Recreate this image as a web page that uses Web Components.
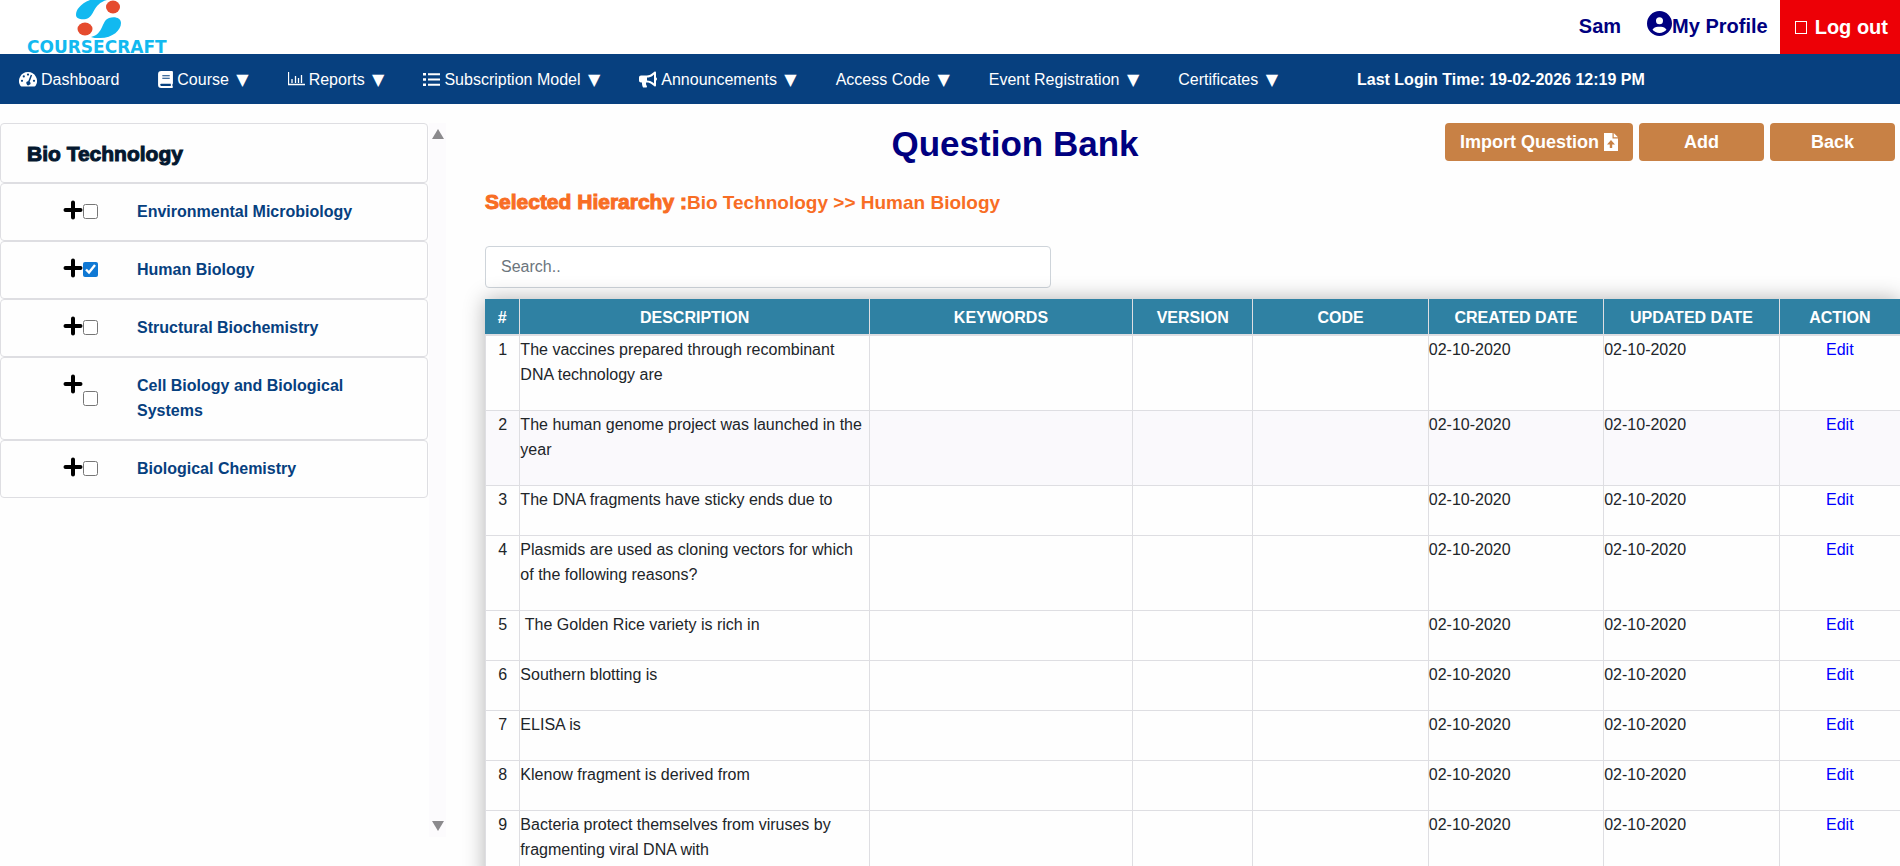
<!DOCTYPE html>
<html lang="en">
<head>
<meta charset="utf-8">
<title>Question Bank</title>
<style>
  body {
    margin: 0;
    background: #fefefe;
    color: #212529;
    font: 16px/25px "Liberation Sans", Arial, sans-serif;
  }
</style>
</head>
<body>
<question-bank-app></question-bank-app>

<script>
const icons = {
  gauge: `<svg viewBox="0 0 18 16" width="18" height="16"><path fill="currentColor" d="M9 1a9 9 0 0 0-7.6 13.8c.3.4.7.6 1.2.6h12.8c.5 0 .9-.2 1.2-.6A9 9 0 0 0 9 1z"/><g fill="#06407f"><circle cx="9" cy="3.6" r="1.1"/><circle cx="4.8" cy="5.4" r="1.1"/><circle cx="3" cy="9.8" r="1.1"/><circle cx="15" cy="9.8" r="1.1"/><path d="M11.8 3.8l1.3.5-2.4 6.4a2 2 0 1 1-1.5-.5z"/></g></svg>`,
  book: `<svg viewBox="0 0 14 16" width="15" height="17"><path fill="currentColor" d="M3 0h10a1 1 0 0 1 1 1v10.500a1 1 0 0 1-.5.9v1.700a1 1 0 0 1 .5.9 1 1 0 0 1-1 1H3a3 3 0 0 1-3-3V3a3 3 0 0 1 3-3z"/><path fill="#06407f" d="M4 4h7v1H4zM4 6.300h7v1H4zM3 12h9v2H3a1 1 0 0 1 0-2z"/></svg>`,
  chart: `<svg viewBox="0 0 17 14" width="17" height="14"><path fill="none" stroke="currentColor" d="M.5 0v12.500H17M4 11V7M7.500 11V4M10.500 11V6M13.500 11V3" stroke-width="1.300"/></svg>`,
  list: `<svg viewBox="0 0 17 15" width="17" height="15"><path fill="currentColor" d="M0 1h3v2.600H0zM0 6.200h3v2.600H0zM0 11.400h3V14H0zM5 1.300h12v2H5zM5 6.500h12v2H5zM5 11.700h12v2H5z"/></svg>`,
  bullhorn: `<svg viewBox="0 0 576 512" width="18" height="17"><path fill="currentColor" d="M576 240c0-23.630-12.950-44.040-32-55.120V32.010C544 23.260 537.020 0 512 0c-7.120 0-14.190 2.380-19.980 7.020l-85.030 68.030C364.280 109.190 310.660 128 256 128H64c-35.350 0-64 28.650-64 64v96c0 35.350 28.650 64 64 64h33.700c-1.390 10.480-2.180 21.140-2.180 32 0 39.770 9.260 77.350 25.560 110.940 5.190 10.690 16.520 17.060 28.400 17.060h74.280c26.050 0 41.690-29.840 25.900-50.560-16.400-21.520-26.150-48.360-26.150-77.440 0-11.110 1.620-21.790 4.410-32H256c54.660 0 108.280 18.810 150.980 52.950l85.030 68.030a32 32 0 0 0 19.980 7.020c24.920 0 32-22.780 32-32V295.130C563.050 284.040 576 263.630 576 240zm-96 141.420l-33.050-26.440C392.950 311.780 325.120 288 256 288v-96c69.120 0 136.950-23.780 190.950-66.980L480 98.580v282.840z"/></svg>`,
  user: `<svg viewBox="0 0 512 512" width="25" height="25"><path fill="currentColor" d="M399 384.200C376.900 345.800 335.400 320 288 320H224c-47.400 0-88.900 25.800-111 64.200c35.200 39.200 86.200 63.800 143 63.800s107.800-24.700 143-63.800zM0 256a256 256 0 1 1 512 0A256 256 0 1 1 0 256zm256 16a72 72 0 1 0 0-144 72 72 0 1 0 0 144z"/></svg>`,
  plus: `<svg viewBox="0 0 20 20" width="20" height="20"><path stroke="#000" stroke-width="4" stroke-linecap="round" d="M10 2.500v15M2.500 10h15"/></svg>`,
  upload: `<svg viewBox="0 0 14 18" width="14" height="18"><path fill="currentColor" d="M0 0h8.500v5.500H14V18H0zM9.700 0L14 4.300H9.700z"/><path fill="#c88145" d="M7 7l4 4.500H8.200V15H5.800v-3.500H3z"/></svg>`
};

/* header */
const headerTemplate = document.createElement('template');
headerTemplate.innerHTML = `
  <style>
    :host {
      display: flex;
      height: 54px;
      justify-content: space-between;
      background: #fff;
      color: navy;
      font-size: 20px;
      font-weight: bold;
    }
    a {
      color: inherit;
      text-decoration: none;
    }
    .logo {
      display: block;
      padding-left: 24px;
    }
    .logo svg {
      display: block;
      overflow: visible;
    }
    .account {
      display: flex;
    }
    .user, .profile {
      display: flex;
      align-items: center;
      padding-bottom: 2px;
    }
    .user {
      margin-right: 26px;
    }
    .profile {
      margin-right: 12px;
    }
    .profile svg {
      margin-bottom: 6px;
    }
    .logout {
      display: flex;
      align-items: center;
      gap: 8px;
      padding: 0 12px 0 15px;
      background: #ed0006;
      color: #fff;
    }
    .missing {
      width: 10px;
      height: 11px;
      border: 1px solid #fff;
    }
  </style>
  <a class="logo" href="#" aria-label="Coursecraft">
    <svg width="150" height="54" viewBox="24 0 150 54">
      <path fill="#12b9f0" d="M107 0H90C80 4 76 10 76 15c0 4 6 5 10 4C95 17 92 4 107 0z"/>
      <path fill="#12b9f0" d="M91 37c13-3 10-16 18-19 6-2 12 0 12 5 0 7-8 15-21 15-4 0-7 0-9-1z"/>
      <ellipse fill="#e54b2e" cx="113" cy="7" rx="7" ry="6.500"/>
      <ellipse fill="#e54b2e" cx="85" cy="29" rx="7.500" ry="6.500"/>
      <text x="27" y="53" font-family="DejaVu Sans" font-size="17" fill="#12b9f0">COURSECRAFT</text>
    </svg>
  </a>
  <div class="account">
    <span class="user"><slot></slot></span>
    <a class="profile" href="#">${icons.user}My Profile</a>
    <a class="logout" href="#"><span class="missing"></span>Log out</a>
  </div>
`;

class SiteHeader extends HTMLElement {
  constructor() {
    super();
    this.attachShadow({ mode: 'open' });
    this.shadowRoot.appendChild(headerTemplate.content.cloneNode(true));
  }
}

/* navigation */
class NavItem extends HTMLElement {
  constructor() {
    super();
    this.attachShadow({ mode: 'open' });
  }

  connectedCallback() {
    const icon = icons[this.getAttribute('icon')] || '';
    const arrow = this.hasAttribute('menu') ? ' <span class="arrow">▼</span>' : '';
    this.shadowRoot.innerHTML = `
      <style>
        :host {
          display: block;
        }
        a {
          display: flex;
          align-items: center;
          gap: 4px;
          color: #fff;
          text-decoration: none;
          white-space: nowrap;
        }
        .arrow {
          margin-left: 3px;
          font-family: "DejaVu Sans", sans-serif;
          line-height: 16px;
        }
      </style>
      <a href="#">${icon}<span><slot></slot>${arrow}</span></a>
    `;
  }
}

const navTemplate = document.createElement('template');
navTemplate.innerHTML = `
  <style>
    :host {
      display: block;
      background: #07407f;
      color: #fff;
    }
    nav {
      display: flex;
      align-items: center;
      gap: 39px;
      height: 50px;
      padding: 0 19px;
    }
    .login {
      margin-left: 40px;
      font-weight: bold;
      white-space: nowrap;
    }
  </style>
  <nav>
    <nav-item icon="gauge">Dashboard</nav-item>
    <nav-item icon="book" menu>Course</nav-item>
    <nav-item icon="chart" menu>Reports</nav-item>
    <nav-item icon="list" menu>Subscription Model</nav-item>
    <nav-item icon="bullhorn" menu>Announcements</nav-item>
    <nav-item menu>Access Code</nav-item>
    <nav-item menu>Event Registration</nav-item>
    <nav-item menu>Certificates</nav-item>
    <span class="login"><slot></slot></span>
  </nav>
`;

class NavBar extends HTMLElement {
  constructor() {
    super();
    this.attachShadow({ mode: 'open' });
    this.shadowRoot.appendChild(navTemplate.content.cloneNode(true));
  }
}

/* sidebar */
class TopicItem extends HTMLElement {
  constructor() {
    super();
    this.attachShadow({ mode: 'open' });
  }

  connectedCallback() {
    const checked = this.hasAttribute('checked') ? 'checked' : '';
    this.shadowRoot.innerHTML = `
      <style>
        :host {
          display: flex;
          padding: 15px 64px 16px 62px;
          border: 1px solid #dedee2;
          border-radius: 4px;
          color: #06407f;
          font-weight: bold;
        }
        button {
          display: flex;
          align-items: flex-start;
          padding: 1px 0 0;
          border: none;
          background: none;
        }
        input {
          align-self: center;
          flex: none;
          width: 15px;
          height: 15px;
          margin: 0 39px 0 0;
          accent-color: #0f78d4;
        }
      </style>
      <button aria-label="Expand">${icons.plus}</button>
      <input type="checkbox" id="topic" ${checked}>
      <label for="topic"><slot></slot></label>
    `;
  }
}

const treeTemplate = document.createElement('template');
treeTemplate.innerHTML = `
  <style>
    :host {
      display: flex;
      height: calc(100vh - 152px);
    }
    .topics {
      flex: 1;
    }
    h2 {
      margin: 0;
      padding: 17px 26px 16px;
      border: 1px solid #dedee2;
      border-radius: 4px;
      color: #04182f;
      font-size: 21px;
      font-weight: 900;
      line-height: 25px;
      -webkit-text-stroke: 1px;
    }
    .track {
      display: flex;
      flex-direction: column;
      justify-content: space-between;
      align-items: center;
      width: 17px;
      margin-left: 1px;
      padding: 6px 0;
      background: #fcfbfd;
    }
    .up, .down {
      border: 6px solid transparent;
    }
    .up {
      border-top: none;
      border-bottom: 10px solid #8b8a8d;
    }
    .down {
      border-bottom: none;
      border-top: 10px solid #8b8a8d;
    }
  </style>
  <div class="topics">
    <h2><slot name="title"></slot></h2>
    <slot></slot>
  </div>
  <div class="track"><span class="up"></span><span class="down"></span></div>
`;

class TopicTree extends HTMLElement {
  constructor() {
    super();
    this.attachShadow({ mode: 'open' });
    this.shadowRoot.appendChild(treeTemplate.content.cloneNode(true));
  }
}

/* buttons */
class ActionButton extends HTMLElement {
  constructor() {
    super();
    this.attachShadow({ mode: 'open' });
  }

  connectedCallback() {
    this.shadowRoot.innerHTML = `
      <style>
        :host {
          display: block;
        }
        button {
          display: flex;
          align-items: center;
          justify-content: center;
          gap: 5px;
          min-width: 125px;
          height: 38px;
          padding: 0 15px;
          border: none;
          border-radius: 4px;
          background: #c88145;
          color: #fff;
          font: bold 18px "Liberation Sans", Arial, sans-serif;
          white-space: nowrap;
        }
      </style>
      <button><slot></slot>${icons[this.getAttribute('icon')] || ''}</button>
    `;
  }
}

/* question table */
const questions = [
  'The vaccines prepared through recombinant DNA technology are',
  'The human genome project was launched in the year',
  'The DNA fragments have sticky ends due to',
  'Plasmids are used as cloning vectors for which of the following reasons?',
  '&nbsp;The Golden Rice variety is rich in',
  'Southern blotting is',
  'ELISA is',
  'Klenow fragment is derived from',
  'Bacteria protect themselves from viruses by fragmenting viral DNA with'
];

class QuestionTable extends HTMLElement {
  constructor() {
    super();
    this.attachShadow({ mode: 'open' });
  }

  connectedCallback() {
    const columns = [
      ['#', 2.5], ['Description', 24.7], ['Keywords', 18.6], ['Version', 8.5],
      ['Code', 12.4], ['Created Date', 12.4], ['Updated Date', 12.4], ['Action', 8.5]
    ];
    const rows = questions.map((text, i) => `
      <tr class="${i === 1 ? 'active' : ''}">
        <td class="center">${i + 1}</td>
        <td>${text}</td>
        <td></td><td></td><td></td>
        <td>02-10-2020</td>
        <td>02-10-2020</td>
        <td class="center"><a href="#">Edit</a></td>
      </tr>`).join('');

    this.shadowRoot.innerHTML = `
      <style>
        :host {
          display: block;
        }
        table {
          width: 100%;
          table-layout: fixed;
          border-spacing: 0;
          background: #fefefe;
          box-shadow: 0 0 20px rgba(0, 0, 0, 0.3);
        }
        th, td {
          border-right: 1px solid #dedee2;
        }
        th:last-child, td:last-child {
          border-right: none;
        }
        td:first-child {
          border-left: 1px solid #dedee2;
        }
        th {
          padding: 6px 0 4px;
          border-bottom: 2px solid #dedee2;
          background: #2f81a3;
          color: #fff;
          text-transform: uppercase;
        }
        td {
          padding: 1px 0 23px;
          border-bottom: 1px solid #dedee2;
          vertical-align: top;
        }
        .center {
          text-align: center;
        }
        .active {
          background: #faf9fc;
        }
        a {
          color: #00f;
          text-decoration: none;
        }
      </style>
      <table>
        <colgroup>${columns.map(c => `<col style="width: ${c[1]}%">`).join('')}</colgroup>
        <thead><tr>${columns.map(c => `<th>${c[0]}</th>`).join('')}</tr></thead>
        <tbody>${rows}</tbody>
      </table>
    `;
  }
}

/* page */
const appTemplate = document.createElement('template');
appTemplate.innerHTML = `
  <style>
    :host {
      display: flex;
      flex-direction: column;
      height: 100vh;
      overflow: hidden;
    }
    .content {
      display: flex;
      flex: 1;
      gap: 39px;
      padding-top: 19px;
      min-height: 0;
    }
    topic-tree {
      flex: 0 0 446px;
    }
    main {
      flex: 1;
      min-width: 0;
    }
    .heading {
      display: flex;
      gap: 6px;
      padding-right: 5px;
    }
    h1 {
      flex: 1;
      margin: 0;
      padding-left: 106px;
      color: navy;
      font-size: 35px;
      line-height: 42px;
      text-align: center;
    }
    .path {
      margin: 24px 0 31px;
      color: #f86d24;
      font-size: 19px;
      font-weight: bold;
      line-height: 25px;
    }
    .path b {
      font-size: 21px;
      font-weight: 900;
      -webkit-text-stroke: 1px;
    }
    input {
      display: block;
      box-sizing: border-box;
      width: 40%;
      height: 42px;
      margin-bottom: 11px;
      padding: 0 15px;
      border: 1px solid #ced4da;
      border-radius: 4px;
      background: #fff;
      font: inherit;
    }
    input::placeholder {
      color: #6c757d;
    }
  </style>
  <site-header>Sam</site-header>
  <nav-bar>Last Login Time: 19-02-2026 12:19 PM</nav-bar>
  <div class="content">
    <topic-tree>
      <span slot="title">Bio Technology</span>
      <topic-item>Environmental Microbiology</topic-item>
      <topic-item checked>Human Biology</topic-item>
      <topic-item>Structural Biochemistry</topic-item>
      <topic-item>Cell Biology and Biological Systems</topic-item>
      <topic-item>Biological Chemistry</topic-item>
    </topic-tree>
    <main>
      <div class="heading">
        <h1>Question Bank</h1>
        <action-button icon="upload">Import Question</action-button>
        <action-button>Add</action-button>
        <action-button>Back</action-button>
      </div>
      <p class="path"><b>Selected Hierarchy :</b>Bio Technology &gt;&gt; Human Biology</p>
      <input type="text" placeholder="Search.." aria-label="Search">
      <question-table></question-table>
    </main>
  </div>
`;

class QuestionBankApp extends HTMLElement {
  constructor() {
    super();
    this.attachShadow({ mode: 'open' });
    this.shadowRoot.appendChild(appTemplate.content.cloneNode(true));
  }
}

window.customElements.define('site-header', SiteHeader);
window.customElements.define('nav-item', NavItem);
window.customElements.define('nav-bar', NavBar);
window.customElements.define('topic-item', TopicItem);
window.customElements.define('topic-tree', TopicTree);
window.customElements.define('action-button', ActionButton);
window.customElements.define('question-table', QuestionTable);
window.customElements.define('question-bank-app', QuestionBankApp);
</script>
</body>
</html>
